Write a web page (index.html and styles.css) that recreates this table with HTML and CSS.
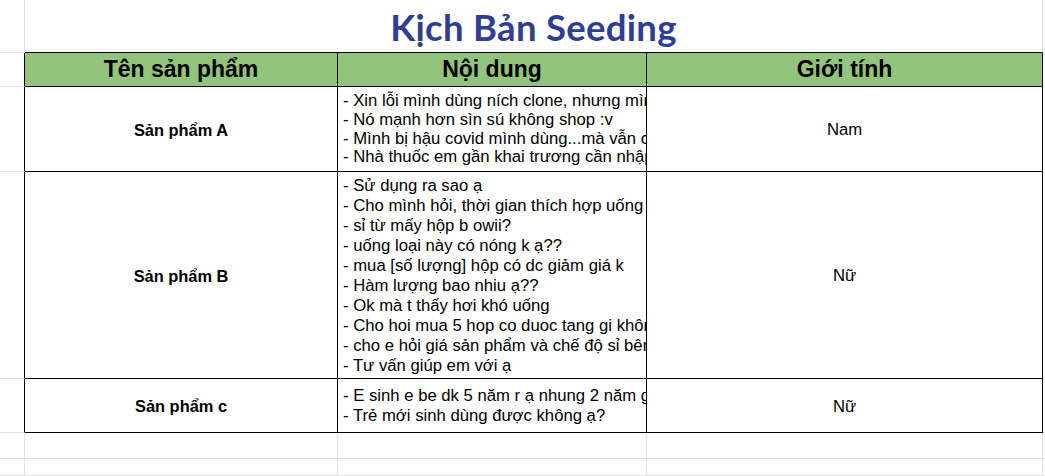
FILE: index.html
```html
<!DOCTYPE html>
<html lang="vi">
<head>
<meta charset="utf-8">
<title>Kịch Bản Seeding</title>
<link rel="stylesheet" href="styles.css">
</head>
<body>
<div class="sheet">
  <div class="g"></div>
  <div class="title">Kịch Bản Seeding</div>
  <div class="g last"></div>

  <div class="g edge"></div>
  <div class="hd">Tên sản phẩm</div>
  <div class="hd">Nội dung</div>
  <div class="hd">Giới tính</div>
  <div class="g last"></div>

  <div class="g edge"></div>
  <div class="name">Sản phẩm A</div>
  <div class="content tight">
    <div>- Xin lỗi mình dùng ních clone, nhưng mình muốn hỏi</div>
    <div>- Nó mạnh hơn sìn sú không shop :v</div>
    <div>- Mình bị hậu covid mình dùng...mà vẫn còn mệt</div>
    <div>- Nhà thuốc em gần khai trương cần nhập hàng</div>
  </div>
  <div class="gender">Nam</div>
  <div class="g last"></div>

  <div class="g edge"></div>
  <div class="name">Sản phẩm B</div>
  <div class="content">
    <div>- Sử dụng ra sao ạ</div>
    <div>- Cho mình hỏi, thời gian thích hợp uống</div>
    <div>- sỉ từ mấy hộp b owii?</div>
    <div>- uống loại này có nóng k ạ??</div>
    <div>- mua [số lượng] hộp có dc giảm giá k</div>
    <div>- Hàm lượng bao nhiu ạ??</div>
    <div>- Ok mà t thấy hơi khó uống</div>
    <div>- Cho hoi mua 5 hop co duoc tang gi không</div>
    <div>- cho e hỏi giá sản phẩm và chế độ sỉ bên mình</div>
    <div>- Tư vấn giúp em với ạ</div>
  </div>
  <div class="gender">Nữ</div>
  <div class="g last"></div>

  <div class="g edge"></div>
  <div class="name">Sản phẩm c</div>
  <div class="content">
    <div>- E sinh e be dk 5 năm r ạ nhung 2 năm gần đây</div>
    <div>- Trẻ mới sinh dùng được không ạ?</div>
  </div>
  <div class="gender">Nữ</div>
  <div class="g last"></div>

  <div class="g"></div>
  <div class="g"></div>
  <div class="g"></div>
  <div class="g"></div>
  <div class="g last"></div>

  <div class="g"></div>
  <div class="g"></div>
  <div class="g"></div>
  <div class="g"></div>
  <div class="g last"></div>
</div>
</body>
</html>
```

FILE: styles.css
```css
* { box-sizing: border-box; }
html, body { margin: 0; padding: 0; background: #fff; }
body { font-family: "Liberation Sans", Arial, sans-serif; color: #000; }

.sheet {
  display: grid;
  width: 1045px;
  height: 476px;
  grid-template-columns: 25px 313px 309px 396px 1fr;
  grid-template-rows: 53px 34px 85px 207px 54px 26px 1fr;
  overflow: hidden;
}

.g {
  border-right: 1px solid #e2e3e3;
  border-bottom: 1px solid #e2e3e3;
}
.g.edge { border-right-color: #000; }
.g.last { border-right: none; }

.title {
  grid-column: span 3;
  border-right: 1px solid #e2e3e3;
  border-bottom: 1px solid #000;
  display: flex;
  align-items: center;
  justify-content: center;
  font-family: Lato, "Open Sans", sans-serif;
  font-weight: 700;
  font-size: 36.5px;
  letter-spacing: 0.3px;
  color: #2f3e91;
  padding-top: 1px;
}

.hd, .name, .content, .gender {
  border-right: 1px solid #000;
  border-bottom: 1px solid #000;
}

.hd {
  background: #93c47d;
  display: flex;
  align-items: center;
  justify-content: center;
  font-weight: 700;
  font-size: 23px;
}

.name {
  display: flex;
  align-items: center;
  justify-content: center;
  font-weight: 700;
  font-size: 16.4px;
  padding-top: 2px;
}

.gender {
  display: flex;
  align-items: center;
  justify-content: center;
  font-size: 16.7px;
  padding-top: 2px;
}

.content {
  display: flex;
  flex-direction: column;
  justify-content: center;
  padding-left: 5px;
  padding-top: 1px;
  overflow: hidden;
  white-space: nowrap;
  font-size: 16.7px;
  line-height: 20px;
}
.content.tight { line-height: 18.7px; }
```
